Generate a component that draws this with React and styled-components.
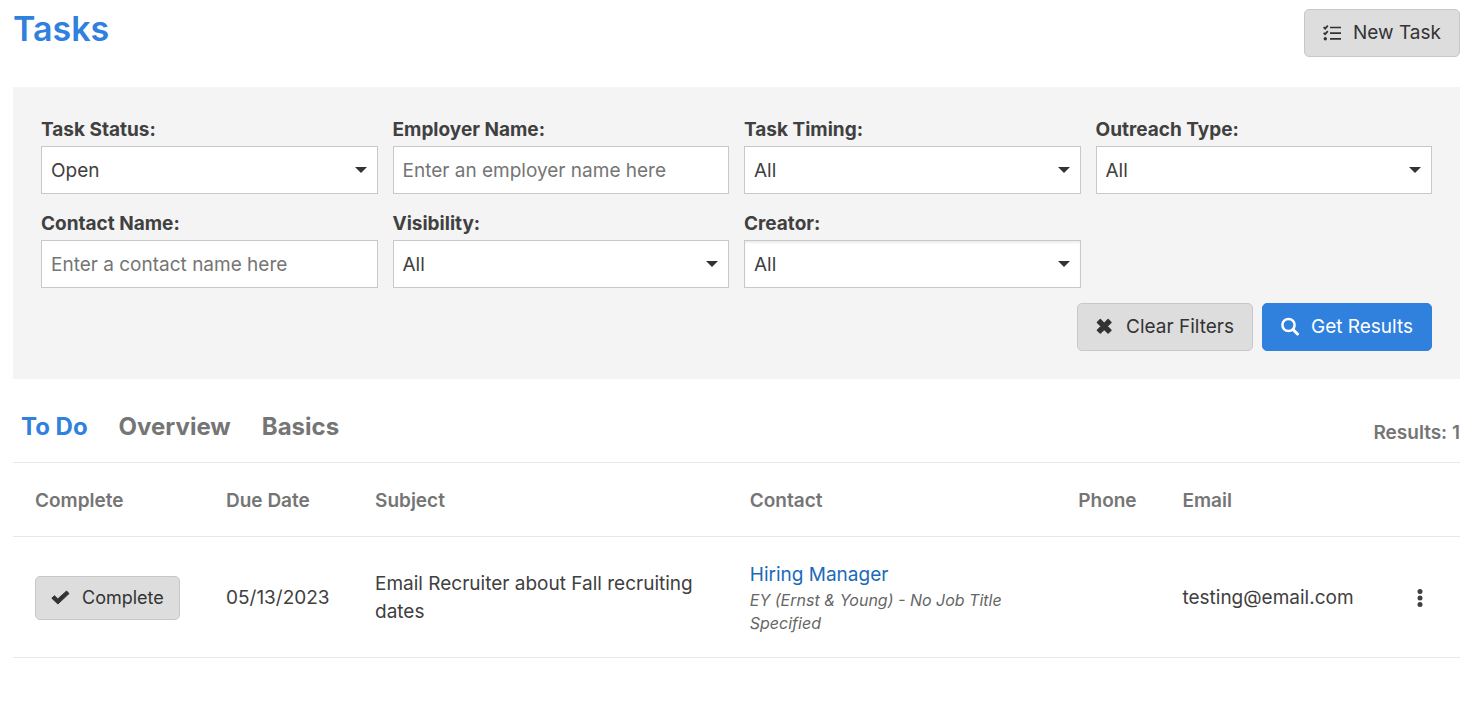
import React from 'react';
import styled, { createGlobalStyle, css } from 'styled-components';

const filters = [
  { id: 'status', label: 'Task Status:', value: 'Open' },
  { id: 'employer', label: 'Employer Name:', placeholder: 'Enter an employer name here' },
  { id: 'timing', label: 'Task Timing:', value: 'All' },
  { id: 'outreach', label: 'Outreach Type:', value: 'All' },
  { id: 'contact', label: 'Contact Name:', placeholder: 'Enter a contact name here' },
  { id: 'visibility', label: 'Visibility:', value: 'All' },
  { id: 'creator', label: 'Creator:', value: 'All', inset: true },
];

const columns = [
  { title: 'Complete', width: '13.2%' },
  { title: 'Due Date', width: '10.3%' },
  { title: 'Subject', width: '25.9%' },
  { title: 'Contact', width: '22.7%' },
  { title: 'Phone', width: '7.2%' },
  { title: 'Email', width: '15.2%' },
  { title: '', width: '5.5%' },
];

const tasks = [
  {
    due: '05/13/2023',
    subject: 'Email Recruiter about Fall recruiting dates',
    contact: 'Hiring Manager',
    company: 'EY (Ernst & Young) - No Job Title Specified',
    phone: '',
    email: 'testing@email.com',
  },
];

// Icons
const TasksIcon = () => (
  <svg width="18" height="18" viewBox="0 0 18 18" fill="none" stroke="currentColor" aria-hidden="true">
    <path d="M.6 3.200l1.500 1.400 2.700-3M.6 8.800l1.500 1.400 2.700-3" strokeWidth="1.800" />
    <path d="M7 3.500h11M7 9.200h11M7 14.800h11" strokeWidth="1.700" />
    <circle cx="2.300" cy="14.800" r="1.700" fill="currentColor" stroke="none" />
  </svg>
);

const CloseIcon = () => (
  <svg width="18" height="18" viewBox="0 0 18 18" aria-hidden="true">
    <path
      fill="currentColor"
      stroke="currentColor"
      strokeWidth="1.400"
      strokeLinejoin="round"
      d="M4.300 1.500L8.200 5.400 12.100 1.500 15 4.400 11.100 8.300 15 12.200 12.100 15.100 8.200 11.200 4.300 15.100 1.400 12.200 5.300 8.300 1.400 4.400z"
    />
  </svg>
);

const SearchIcon = () => (
  <svg width="18" height="20" viewBox="0 0 18 20" fill="none" stroke="currentColor" aria-hidden="true">
    <circle cx="7.500" cy="8" r="6.100" strokeWidth="2.500" />
    <path d="M12 12.500l4.500 4.500" strokeWidth="3" strokeLinecap="round" />
  </svg>
);

const CheckIcon = () => (
  <svg width="19" height="16" viewBox="0 0 19 16" aria-hidden="true">
    <path
      fill="currentColor"
      stroke="currentColor"
      strokeWidth="1"
      strokeLinejoin="round"
      d="M.8 8.200l2.600-2.500L6.800 8.900 15.600 1l2.400 2.600L6.900 14z"
    />
  </svg>
);

const MoreIcon = () => (
  <svg width="8" height="20" viewBox="0 0 8 20" fill="currentColor" aria-hidden="true">
    <circle cx="4" cy="3.500" r="2.500" />
    <circle cx="4" cy="10" r="2.500" />
    <circle cx="4" cy="16.500" r="2.500" />
  </svg>
);

const App = () => {
  return (
    <>
      <GlobalStyle />
      <Page>
        <PageHeader>
          <PageTitle>Tasks</PageTitle>
          <Button type="button">
            <TasksIcon />
            New Task
          </Button>
        </PageHeader>

        <FilterPanel>
          <FilterGrid>
            {filters.map(({ id, label, value, placeholder, inset }) => (
              <Field key={id}>
                <FieldLabel htmlFor={id}>{label}</FieldLabel>
                {placeholder ? (
                  <TextInput id={id} type="text" placeholder={placeholder} />
                ) : (
                  <SelectWrap>
                    <Select id={id} $inset={inset}>
                      <option>{value}</option>
                    </Select>
                    <Caret viewBox="0 0 12 6" aria-hidden="true">
                      <path d="M0 0h12L6 6z" />
                    </Caret>
                  </SelectWrap>
                )}
              </Field>
            ))}
          </FilterGrid>
          <FilterActions>
            <Button type="button">
              <CloseIcon />
              Clear Filters
            </Button>
            <Button type="submit" $primary>
              <SearchIcon />
              Get Results
            </Button>
          </FilterActions>
        </FilterPanel>

        <TabBar>
          <Tabs>
            <Tab href="#todo" $active>To Do</Tab>
            <Tab href="#overview">Overview</Tab>
            <Tab href="#basics">Basics</Tab>
          </Tabs>
          <ResultCount>Results: 1</ResultCount>
        </TabBar>

        <TaskTable>
          <thead>
            <tr>
              {columns.map(({ title, width }) => (
                <HeadCell key={title} $width={width}>{title}</HeadCell>
              ))}
            </tr>
          </thead>
          <tbody>
            {tasks.map((task) => (
              <tr key={task.subject}>
                <Cell>
                  <Button type="button" $small>
                    <CheckIcon />
                    Complete
                  </Button>
                </Cell>
                <Cell>{task.due}</Cell>
                <Cell>{task.subject}</Cell>
                <Cell>
                  <ContactLink href="#contact">{task.contact}</ContactLink>
                  <Company>{task.company}</Company>
                </Cell>
                <Cell>{task.phone}</Cell>
                <Cell>{task.email}</Cell>
                <MenuCell>
                  <MenuButton type="button" aria-label="More actions">
                    <MoreIcon />
                  </MenuButton>
                </MenuCell>
              </tr>
            ))}
          </tbody>
        </TaskTable>
      </Page>
    </>
  );
};

const GlobalStyle = createGlobalStyle`
  *, *::before, *::after {
    box-sizing: border-box;
  }

  body {
    margin: 0;
    background: #fff;
    color: #404040;
    font-family: Inter, 'Liberation Sans', sans-serif;
    font-size: 19px;
    line-height: 28px;
  }

  button, input, select {
    font: inherit;
    color: inherit;
  }
`;

const Page = styled.main`
  padding: 9px 24px 24px 13px;
`;

const PageHeader = styled.header`
  display: flex;
  justify-content: space-between;
  align-items: flex-start;
  margin-bottom: 30px;
`;

const PageTitle = styled.h1`
  margin: 0;
  color: #3080de;
  font-size: 34px;
  font-weight: 600;
  line-height: 40px;
`;

const Button = styled.button`
  display: inline-flex;
  align-items: center;
  gap: 12px;
  height: 48px;
  padding: 0 18px;
  border: 1px solid #c8c8c8;
  border-radius: 5px;
  background: #ddd;
  color: #333;
  white-space: nowrap;
  cursor: pointer;

  ${({ $primary }) => $primary && css`
    border-color: #3080de;
    background: #3080de;
    color: #fff;
  `}

  ${({ $small }) => $small && css`
    height: 44px;
    padding: 0 15px;
    font-size: 18px;
  `}
`;

const FilterPanel = styled.form`
  padding: 28px;
  background: #f4f4f4;
`;

const FilterGrid = styled.div`
  display: grid;
  grid-template-columns: repeat(4, 1fr);
  gap: 15px;
`;

const Field = styled.div`
  display: flex;
  flex-direction: column;
`;

const FieldLabel = styled.label`
  padding: 1px 0 2px;
  font-weight: 700;
`;

const control = css`
  width: 100%;
  height: 48px;
  padding: 0 9px;
  border: 1px solid #c8c8c8;
  border-radius: 0;
  background: #fff;
`;

const TextInput = styled.input`
  ${control}

  &::placeholder {
    color: #757575;
    opacity: 1;
  }
`;

const SelectWrap = styled.div`
  position: relative;
`;

const Select = styled.select`
  ${control}
  display: block;
  padding-top: 2px;
  appearance: none;
  box-shadow: ${({ $inset }) => ($inset ? 'inset 0 2px 2px #eee' : 'none')};
`;

const Caret = styled.svg`
  position: absolute;
  top: 21px;
  right: 11px;
  width: 12px;
  height: 6px;
  fill: #333;
  pointer-events: none;
`;

const FilterActions = styled.div`
  display: flex;
  justify-content: flex-end;
  gap: 9px;
  margin-top: 15px;
`;

const TabBar = styled.div`
  display: flex;
  justify-content: space-between;
  align-items: flex-end;
  padding-top: 32px;
  border-bottom: 1px solid #e8e8e8;
`;

const Tabs = styled.nav`
  display: flex;
  gap: 31px;
  padding: 0 8px 19px;
`;

const Tab = styled.a`
  color: ${({ $active }) => ($active ? '#3080de' : '#757575')};
  font-size: 24px;
  font-weight: 700;
  line-height: 32px;
  text-decoration: none;
`;

const ResultCount = styled.div`
  padding-bottom: 15px;
  color: #757575;
  font-weight: 600;
`;

const TaskTable = styled.table`
  width: 100%;
  table-layout: fixed;
  border-collapse: collapse;
`;

const HeadCell = styled.th`
  width: ${({ $width }) => $width};
  height: 73px;
  padding: 3px 22px 0;
  border-bottom: 1px solid #e8e8e8;
  color: #757575;
  font-weight: 600;
  text-align: left;
`;

const Cell = styled.td`
  height: 121px;
  padding: 23px 22px 21px;
  border-bottom: 1px solid #e8e8e8;
`;

const ContactLink = styled.a`
  color: #1b6ab8;
  text-decoration: none;
`;

const Company = styled.div`
  color: #666;
  font-size: 16px;
  font-style: italic;
  line-height: 23px;
`;

const MenuCell = styled(Cell)`
  text-align: center;
`;

const MenuButton = styled.button`
  display: inline-flex;
  padding: 4px;
  border: 0;
  background: none;
  vertical-align: middle;
  cursor: pointer;
`;

export default App;
